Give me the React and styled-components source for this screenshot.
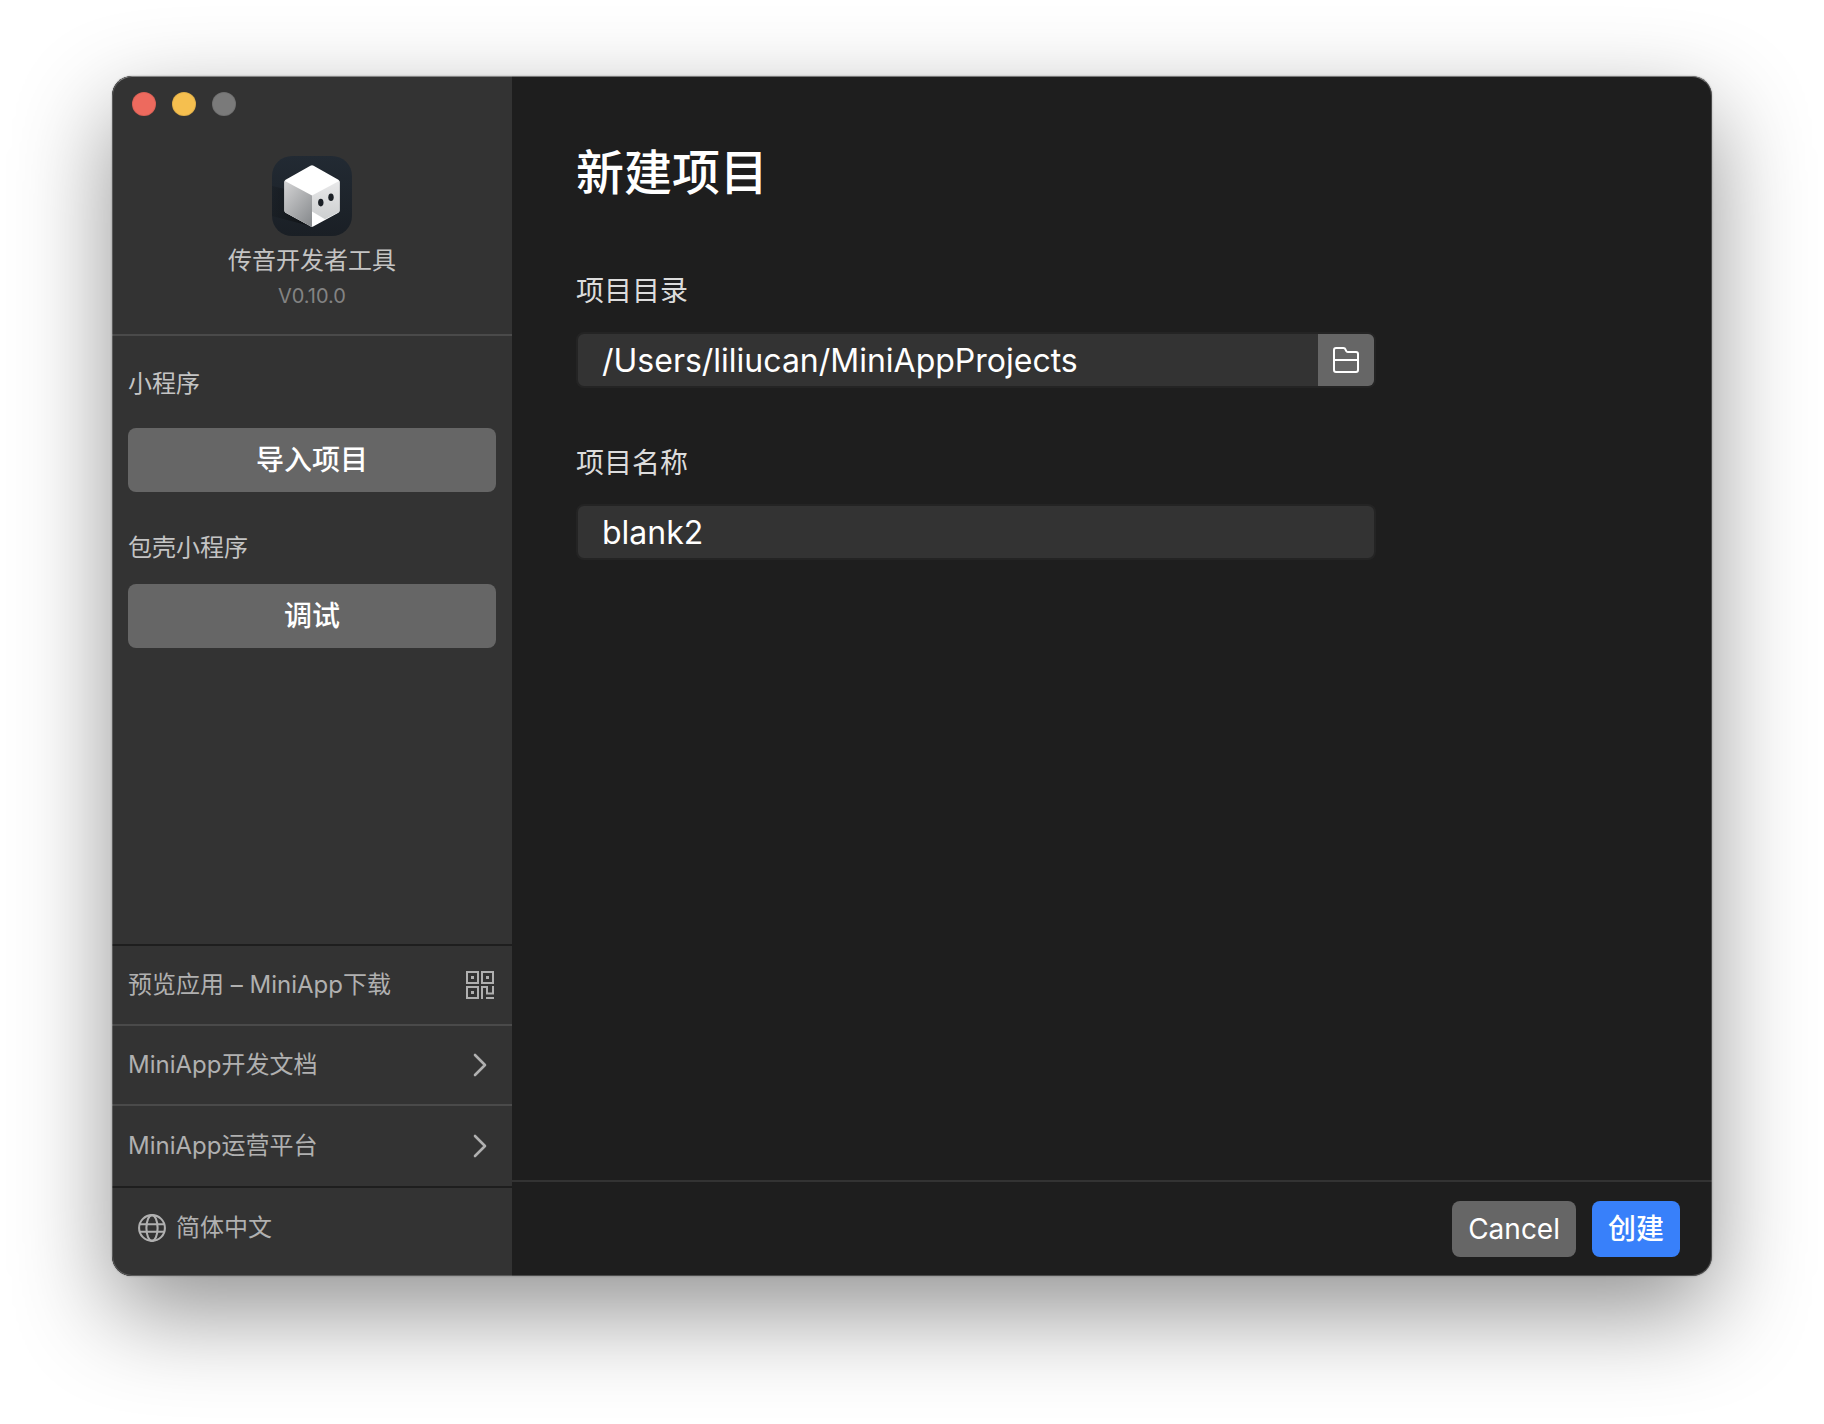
import { useState } from 'react'
import styled, { createGlobalStyle, ThemeProvider } from 'styled-components'

const theme = {
  color: {
    sidebar: '#333333',
    main: '#1e1e1e',
    line: '#4a4a4a',
    button: '#666666',
    primary: '#3880fa',
    white: '#ffffff',
    label: '#dcdcdc',
    text: '#c4c4c4',
    link: '#b0b0b0',
    meta: '#838383',
  },
  font: {
    h1: '48px',
    input: '32px',
    body: '28px',
    small: '24px',
    meta: '20px',
  },
}

const GlobalStyle = createGlobalStyle`
  *,
  *::before,
  *::after {
    box-sizing: border-box;
  }
  body {
    margin: 0;
    background: #ffffff;
    font-family: Inter, 'Noto Sans CJK SC', sans-serif;
  }
  button,
  input {
    font-family: inherit;
    border: 0;
    padding: 0;
    margin: 0;
  }
  button {
    cursor: pointer;
  }
`

const Desktop = styled.div`
  min-height: 100vh;
  padding: 76px 112px 148px;
  display: flex;
`
const Window = styled.div`
  flex: 1;
  display: flex;
  position: relative;
  border-radius: 20px;
  overflow: hidden;
  background: ${({ theme }) => theme.color.main};
  box-shadow: 0 0 2px rgba(0, 0, 0, 0.3), 0 36px 96px rgba(0, 0, 0, 0.43);

  /* thin light rim over the window edge */
  &::after {
    content: '';
    position: absolute;
    inset: 0;
    border: 1px solid rgba(255, 255, 255, 0.2);
    border-top-color: rgba(255, 255, 255, 0.4);
    border-radius: inherit;
    pointer-events: none;
  }
`

const Sidebar = styled.aside`
  flex: 0 0 400px;
  display: flex;
  flex-direction: column;
  background: ${({ theme }) => theme.color.sidebar};
`
const TrafficLights = styled.div`
  display: flex;
  gap: 16px;
  padding: 16px 20px;
`
const Light = styled.button`
  width: 24px;
  height: 24px;
  border-radius: 50%;
  background: ${({ $color }) => $color};
  box-shadow: inset 0 0 0 1px rgba(0, 0, 0, 0.08);
`
const Brand = styled.header`
  display: flex;
  flex-direction: column;
  align-items: center;
  gap: 8px;
  padding: 24px 16px 28px;
  border-bottom: 2px solid ${({ theme }) => theme.color.line};
`
const AppName = styled.div`
  font-size: ${({ theme }) => theme.font.small};
  line-height: 34px;
  color: ${({ theme }) => theme.color.text};
`
const Version = styled.div`
  font-size: ${({ theme }) => theme.font.meta};
  line-height: 20px;
  color: ${({ theme }) => theme.color.meta};
`
const Sections = styled.div`
  flex: 1;
  display: flex;
  flex-direction: column;
  gap: 40px;
  padding: 32px 16px;
`
const Section = styled.section`
  display: flex;
  flex-direction: column;
  gap: ${({ $compact }) => ($compact ? '20px' : '28px')};
`
const SectionTitle = styled.h2`
  margin: 0;
  font-size: ${({ theme }) => theme.font.small};
  font-weight: 400;
  line-height: 32px;
  color: ${({ theme }) => theme.color.text};
`
const Button = styled.button`
  height: ${({ $block }) => ($block ? '64px' : '56px')};
  padding: 0 16px;
  border-radius: 8px;
  font-size: ${({ theme }) => theme.font.body};
  font-weight: ${({ $light }) => ($light ? 400 : 500)};
  line-height: 32px;
  color: ${({ theme }) => theme.color.white};
  background: ${({ theme, $primary }) =>
    $primary ? theme.color.primary : theme.color.button};
`
const Links = styled.nav`
  border-top: 2px solid ${({ theme }) => theme.color.main};
  border-bottom: 2px solid ${({ theme }) => theme.color.main};
`
const LinkRow = styled.a`
  height: 78px;
  padding: 0 18px 0 16px;
  display: flex;
  align-items: center;
  justify-content: space-between;
  font-size: ${({ theme }) => theme.font.small};
  line-height: 32px;
  color: ${({ theme }) => theme.color.link};
  text-decoration: none;

  & + & {
    height: 80px;
    border-top: 2px solid ${({ theme }) => theme.color.line};
  }
  &:last-child {
    height: 82px;
  }
`
const Language = styled.button`
  height: 88px;
  padding: 0 26px 8px;
  display: flex;
  align-items: center;
  gap: 10px;
  font-size: ${({ theme }) => theme.font.small};
  line-height: 32px;
  color: ${({ theme }) => theme.color.link};
  background: transparent;
`

const Form = styled.form`
  flex: 1;
  min-width: 0;
  display: flex;
  flex-direction: column;
`
const FormBody = styled.div`
  flex: 1;
  padding: 69px 64px;
`
const Title = styled.h1`
  margin: 0 0 70px;
  font-size: ${({ theme }) => theme.font.h1};
  font-weight: 500;
  line-height: 56px;
  color: ${({ theme }) => theme.color.white};
`
const Field = styled.div`
  max-width: 800px;
  margin-bottom: 55px;
`
const Label = styled.label`
  display: block;
  margin-bottom: 21px;
  font-size: ${({ theme }) => theme.font.body};
  line-height: 40px;
  color: ${({ theme }) => theme.color.label};
`
const InputWrapper = styled.div`
  display: flex;
  height: 56px;
  border: 2px solid #242424;
  border-radius: 8px;
  overflow: hidden;
  background: ${({ theme }) => theme.color.sidebar};
`
const Input = styled.input`
  flex: 1;
  min-width: 0;
  padding: 0 24px;
  font-size: ${({ theme }) => theme.font.input};
  color: ${({ theme }) => theme.color.white};
  background: transparent;
  outline: none;
`
const BrowseButton = styled.button`
  flex: 0 0 56px;
  display: flex;
  align-items: center;
  justify-content: center;
  color: ${({ theme }) => theme.color.white};
  background: ${({ theme }) => theme.color.button};
`
const Footer = styled.footer`
  display: flex;
  justify-content: flex-end;
  gap: 16px;
  padding: 19px 32px;
  border-top: 2px solid ${({ theme }) => theme.color.sidebar};
`

const Logo = () => (
  <svg width="80" height="80" viewBox="0 0 80 80" aria-hidden="true">
    <defs>
      <linearGradient id="tile" x1="0" y1="0" x2="0" y2="1">
        <stop offset="0" stopColor="#222a33" />
        <stop offset="1" stopColor="#1a1f25" />
      </linearGradient>
      <linearGradient id="leftFace" x1="0.1" y1="0" x2="0.8" y2="1">
        <stop offset="0" stopColor="#d2d2d3" />
        <stop offset="1" stopColor="#898c8f" />
      </linearGradient>
      <linearGradient id="rightFace" x1="0" y1="0" x2="0" y2="1">
        <stop offset="0" stopColor="#e9e9ea" />
        <stop offset="1" stopColor="#cdcfd0" />
      </linearGradient>
      <linearGradient id="shade" x1="0" y1="0" x2="1" y2="0">
        <stop offset="0" stopColor="#14181c" stopOpacity="0.3" />
        <stop offset="1" stopColor="#0e1114" />
      </linearGradient>
      <clipPath id="cube">
        <path d="M38.4 9.8Q40 8.8 41.6 9.8L66.4 23.8Q67.6 24.6 67.6 26V54.6Q67.6 56 66.4 56.8L41.6 70.2Q40 71.2 38.4 70.2L13.6 56.8Q12.4 56 12.4 54.6V26Q12.4 24.6 13.6 23.8Z" />
      </clipPath>
    </defs>
    <rect width="80" height="80" rx="20" fill="url(#tile)" />
    <path d="M0 30L13 33V56L38 70L0 60Z" fill="url(#shade)" />
    <g clipPath="url(#cube)">
      <rect width="80" height="80" fill="#ffffff" />
      <path d="M12 24.5L40 39.5V72L12 57Z" fill="url(#leftFace)" />
      <path d="M40 39.5L68 24.5V55.5L53 63.2L40 55.6Z" fill="url(#rightFace)" />
    </g>
    <ellipse cx="48.8" cy="46.6" rx="2.7" ry="3.8" fill="#1b2026" />
    <ellipse cx="59" cy="41.3" rx="2.7" ry="3.8" fill="#1b2026" />
  </svg>
)

const QrIcon = () => (
  <svg
    width="28"
    height="28"
    viewBox="0 0 28 28"
    fill="none"
    stroke="currentColor"
    strokeWidth="2"
    aria-hidden="true"
  >
    <path d="M1 1H12V12H1ZM16 1H27V12H16ZM1 16H12V27H1Z" />
    <path d="M16 28V16H21V22.6H27V15M20 27H28" />
    <path d="M5 6.5H8M20 6.5H23M5 21.5H8" strokeWidth="3" />
  </svg>
)

const ChevronIcon = () => (
  <svg
    width="28"
    height="28"
    viewBox="0 0 28 28"
    fill="none"
    stroke="currentColor"
    strokeWidth="2.6"
    strokeLinecap="round"
    strokeLinejoin="round"
    aria-hidden="true"
  >
    <path d="M9 4L19 14L9 24" />
  </svg>
)

const GlobeIcon = () => (
  <svg
    width="28"
    height="28"
    viewBox="0 0 28 28"
    fill="none"
    stroke="currentColor"
    strokeWidth="2.1"
    aria-hidden="true"
  >
    <circle cx="14" cy="14" r="12.9" />
    <ellipse cx="14" cy="14" rx="5.6" ry="12.9" />
    <path d="M2 10.2H26M2 17.8H26" />
  </svg>
)

const FolderIcon = () => (
  <svg
    width="26"
    height="26"
    viewBox="0 0 26 26"
    fill="none"
    stroke="currentColor"
    strokeWidth="2"
    strokeLinejoin="round"
    aria-hidden="true"
  >
    <path d="M1 3Q1 1 3 1H10.4Q12 1 12.6 2.6L13.2 4Q13.6 5 14.8 5H23Q25 5 25 7V23Q25 25 23 25H3Q1 25 1 23Z" />
    <path d="M1 13H25" />
  </svg>
)

export default function App() {
  const [form, setForm] = useState({
    dir: '/Users/liliucan/MiniAppProjects',
    name: 'blank2',
  })

  const handleChange = (e) => {
    setForm({
      ...form,
      [e.target.name]: e.target.value,
    })
  }

  return (
    <ThemeProvider theme={theme}>
      <GlobalStyle />
      <Desktop>
        <Window>
          <Sidebar>
            <TrafficLights>
              <Light $color="#ed6a5e" aria-label="Close" />
              <Light $color="#f5bf4f" aria-label="Minimize" />
              <Light $color="#7a7a7a" aria-label="Zoom" />
            </TrafficLights>
            <Brand>
              <Logo />
              <AppName>传音开发者工具</AppName>
              <Version>V0.10.0</Version>
            </Brand>
            <Sections>
              <Section>
                <SectionTitle>小程序</SectionTitle>
                <Button $block>导入项目</Button>
              </Section>
              <Section $compact>
                <SectionTitle>包壳小程序</SectionTitle>
                <Button $block>调试</Button>
              </Section>
            </Sections>
            <Links>
              <LinkRow href="#download">
                预览应用 – MiniApp下载
                <QrIcon />
              </LinkRow>
              <LinkRow href="#docs">
                MiniApp开发文档
                <ChevronIcon />
              </LinkRow>
              <LinkRow href="#platform">
                MiniApp运营平台
                <ChevronIcon />
              </LinkRow>
            </Links>
            <Language>
              <GlobeIcon />
              简体中文
            </Language>
          </Sidebar>
          <Form onSubmit={(e) => e.preventDefault()}>
            <FormBody>
              <Title>新建项目</Title>
              <Field>
                <Label htmlFor="dir">项目目录</Label>
                <InputWrapper>
                  <Input
                    type="text"
                    id="dir"
                    name="dir"
                    value={form.dir}
                    onChange={handleChange}
                    autoComplete="off"
                    spellCheck="false"
                  />
                  <BrowseButton type="button" aria-label="选择目录">
                    <FolderIcon />
                  </BrowseButton>
                </InputWrapper>
              </Field>
              <Field>
                <Label htmlFor="name">项目名称</Label>
                <InputWrapper>
                  <Input
                    type="text"
                    id="name"
                    name="name"
                    value={form.name}
                    onChange={handleChange}
                    autoComplete="off"
                    spellCheck="false"
                  />
                </InputWrapper>
              </Field>
            </FormBody>
            <Footer>
              <Button type="button" $light>
                Cancel
              </Button>
              <Button type="submit" $primary>
                创建
              </Button>
            </Footer>
          </Form>
        </Window>
      </Desktop>
    </ThemeProvider>
  )
}
